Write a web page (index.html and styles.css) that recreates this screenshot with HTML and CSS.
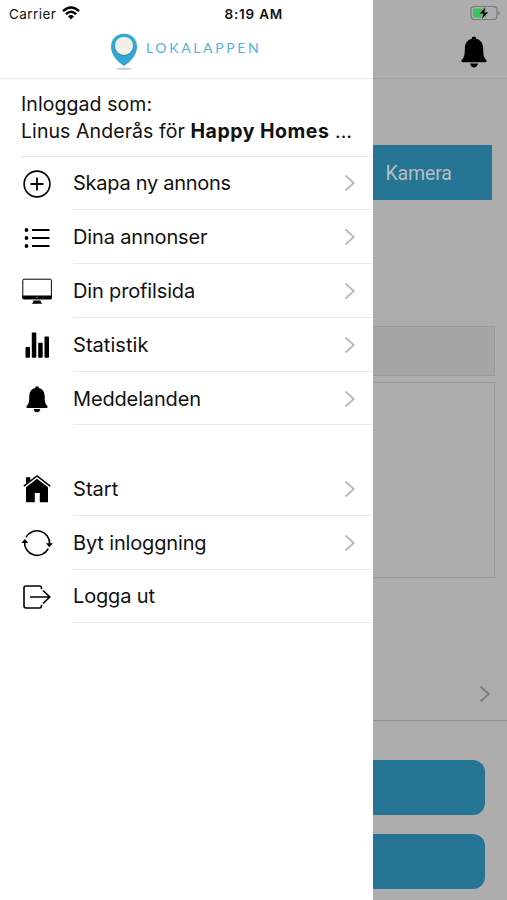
FILE: index.html
```html
<!DOCTYPE html>
<html lang="sv">
<head>
<meta charset="utf-8">
<meta name="viewport" content="width=device-width, initial-scale=1">
<title>Lokalappen</title>
<link rel="stylesheet" href="styles.css">
</head>
<body>
<svg width="0" height="0" class="defs" aria-hidden="true">
  <symbol id="bell" viewBox="0 0 26 32"><path d="M13 .5c1.300 0 2.100 .9 2.200 2.200 4.500 1 6.700 4.600 6.900 9.300.2 7 .6 9.500 3.400 12.200.4 1.300-.2 2-1.300 2H1.800c-1.100 0-1.700-.7-1.300-2C3.300 21.500 3.700 19 3.900 12c.2-4.700 2.400-8.300 6.900-9.300C10.900 1.400 11.700.5 13 .5zM9 27.500h8c-.3 2.400-1.900 3.900-4 3.900s-3.700-1.500-4-3.900z"/></symbol>
  <symbol id="chevron" viewBox="0 0 12 18"><path d="M1.500 1.500L9.700 9l-8.200 7.500" fill="none" stroke="currentColor" stroke-width="2"/></symbol>
</svg>
<div class="screen">
  <aside class="drawer">
    <header class="top">
      <div class="status">
        <span class="carrier">Carrier</span>
        <svg class="wifi" viewBox="0 0 18 14"><path d="M1 5.200Q9-2.200 17 5.200M3.900 8.100Q9 3.400 14.100 8.100" fill="none" stroke="#000" stroke-width="2.400"/><path d="M9 13.500L5.900 10.300Q9 7.800 12.100 10.300z"/></svg>
        <span class="time">8:19 AM</span>
      </div>
      <div class="brand">
        <svg class="pin" viewBox="0 0 28 38"><ellipse cx="14" cy="35.700" rx="8" ry="1.100" fill="#c9c9c9"/><path d="M14 .8C6.400 .8 1 6.300 1 13.400 1 22.500 7.500 28.500 14 33c6.500-4.500 13-10.500 13-19.600C27 6.300 21.600 .8 14 .8z" fill="#35a5d3"/><circle cx="14" cy="13.700" r="9.300" fill="#2088b2"/><circle cx="14" cy="12.800" r="9.100" fill="#f0f1eb"/></svg>
        <span class="name">LOKALAPPEN</span>
      </div>
    </header>
    <div class="user"><div>Inloggad som:</div><div class="who">Linus Anderås för <b>Happy Homes</b> ...</div></div>
    <nav class="menu">
      <a class="row"><svg class="icon" viewBox="0 0 32 32"><g fill="none" stroke="#000" stroke-width="1.600"><circle cx="16" cy="16" r="12.900"/><path d="M16 9.500v13M9.500 16h13" stroke-width="1.800"/></g></svg><span class="label"><span class="tight">Skapa ny annons</span><svg class="chev"><use href="#chevron"/></svg></span></a>
      <a class="row"><svg class="icon" viewBox="0 0 32 32"><path d="M11 8h17.500M11 16h17.500M11 24h17.500" stroke="#000" stroke-width="1.800"/><circle cx="5.500" cy="8" r="1.900"/><circle cx="5.500" cy="16" r="1.900"/><circle cx="5.500" cy="24" r="1.900"/></svg><span class="label"><span>Dina annonser</span><svg class="chev"><use href="#chevron"/></svg></span></a>
      <a class="row"><svg class="icon" viewBox="0 0 32 32"><rect x="1.800" y="4.200" width="28.600" height="19.600" rx="1.200" fill="none" stroke="#000" stroke-width="1"/><path d="M1.300 20.500h29.600v2.300q0 1.500-1.500 1.500H2.800q-1.500 0-1.500-1.500zM12.500 25.500h7l.5 2 1.500 1.300h-11l1.500-1.300z"/><circle cx="16" cy="22.400" r=".6" fill="#aaa"/></svg><span class="label"><span>Din profilsida</span><svg class="chev"><use href="#chevron"/></svg></span></a>
      <a class="row"><svg class="icon" viewBox="0 0 32 32"><rect x="4.500" y="18" width="4.500" height="10.800" rx=".8"/><rect x="10.800" y="3.500" width="4.500" height="25.300" rx=".8"/><rect x="17.200" y="13.700" width="4.500" height="15.100" rx=".8"/><rect x="23.500" y="7.500" width="4.500" height="21.300" rx=".8"/></svg><span class="label"><span class="natural">Statistik</span><svg class="chev"><use href="#chevron"/></svg></span></a>
      <a class="row"><svg class="icon" viewBox="0 0 32 32"><use href="#bell" x="5" y="2.800" width="22" height="27"/></svg><span class="label"><span>Meddelanden</span><svg class="chev"><use href="#chevron"/></svg></span></a>
    </nav>
    <nav class="menu second">
      <a class="row"><svg class="icon" viewBox="0 0 32 32"><path d="M5 14.200L16 5.700l11 8.500v15H18.800V20h-5v9.200H5z"/><path d="M2.800 13.200L16 3l13.200 10.200" fill="none" stroke="#000" stroke-width="1.500"/><path d="M5 4.200h4.300v3L5 10.600z"/></svg><span class="label"><span class="natural">Start</span><svg class="chev"><use href="#chevron"/></svg></span></a>
      <a class="row"><svg class="icon" viewBox="0 0 32 32"><path d="M5 10.200A12.600 12.600 0 0 1 28.600 17M27.300 21.600A12.600 12.600 0 0 1 3.600 14.500" fill="none" stroke="#000" stroke-width="1.600"/><path d="M.3 16l3.500-4 3.500 4zM24.900 16.300h7l-3.500 4z"/></svg><span class="label"><span>Byt inloggning</span><svg class="chev"><use href="#chevron"/></svg></span></a>
      <a class="row"><svg class="icon" viewBox="0 0 32 32"><path d="M20.500 8.200V7q0-2-2-2H5Q3 5 3 7v18q0 2 2 2h13.500q2 0 2-2v-1.200M9 16h19.500M22 9.500l6.800 6.500-6.800 6.500" fill="none" stroke="#000" stroke-width="1.600"/></svg><span class="label"><span>Logga ut</span></span></a>
    </nav>
  </aside>
  <main class="page">
    <header class="page-top">
      <svg class="battery" viewBox="0 0 32 16"><rect x="1" y="1.500" width="26" height="13" rx="3.500" fill="none" stroke="#777" stroke-width="1.200"/><rect x="3" y="3.500" width="13.500" height="9" rx="1.500" fill="#35c759"/><path d="M28.500 5.800q3 2.200 0 4.400z" fill="#777"/><path d="M16 1.500L8.800 8.900h4.100L11.400 14.700 18.800 7.100h-4.200z" fill="#000" stroke="#adadad" stroke-width=".7"/></svg>
      <svg class="alert"><use href="#bell"/></svg>
    </header>
    <div class="camera"><span>Kamera</span></div>
    <div class="field"></div>
    <div class="area"></div>
    <div class="link"><svg class="chev"><use href="#chevron"/></svg></div>
    <div class="button"></div>
    <div class="button"></div>
  </main>
</div>
</body>
</html>
```
FILE: styles.css
```css
* { box-sizing: border-box; }
body { margin: 0; font-family: Inter, "Liberation Sans", sans-serif; color: #111; }
svg { display: block; flex: none; }
.defs { position: absolute; }
.screen { display: flex; width: 507px; height: 900px; overflow: hidden; background: #fff; }
.drawer { width: 372.500px; flex: none; background: #fff; }
.top { height: 79px; border-bottom: 1px solid #ececec; }
.status { display: flex; align-items: center; height: 27px; padding-left: 9px; font-size: 13.500px; }
.carrier { width: 53px; letter-spacing: .42px; white-space: nowrap; }
.wifi { width: 18px; height: 14px; margin-top: -2px; }
.time { margin-left: 144.500px; font-weight: 600; letter-spacing: .8px; white-space: nowrap; }
.brand { display: flex; padding: 6px 0 0 110px; }
.pin { width: 28px; height: 38px; }
.name { margin: 5px 0 0 8px; font: 14px/20px Lato, sans-serif; letter-spacing: 2.650px; color: #50b3dc; }
.user { height: 77.500px; margin-left: 21px; padding-top: 12px; border-bottom: 1px solid #e9e9e9; font-size: 19.500px; line-height: 27px; letter-spacing: .08px; white-space: nowrap; }
.user b { font-weight: 700; letter-spacing: .5px; }
.menu { display: flex; flex-direction: column; }
.second { margin-top: 36.500px; }
.row { display: flex; align-items: center; height: 53.800px; padding-left: 21px; }
.icon { width: 32px; height: 32px; margin-top: 1px; }
.label { display: flex; flex: 1; align-items: center; justify-content: space-between; height: 100%; margin-left: 20px; padding: 1px 17px 0 0; border-bottom: 1px solid #e9e9e9; font-size: 20px; letter-spacing: -.15px; white-space: nowrap; }
.tight { letter-spacing: -.27px; }
.natural { letter-spacing: .05px; }
.chev { width: 12px; height: 18px; color: #bdbdbd; }
.page { flex: 1; background: #adadad; }
.page-top { display: flex; flex-direction: column; align-items: flex-end; height: 79px; padding-top: 5px; border-bottom: 1px solid #a1a1a1; }
.battery { width: 32px; height: 16px; margin-right: 5px; }
.alert { width: 26px; height: 32px; margin: 15px 20px 0 0; }
.camera { display: flex; align-items: center; height: 54.500px; margin: 66px 15px 0 0; padding: 2px 0 0 13px; background: #267594; color: #b8bec0; font: 19.500px Roboto, sans-serif; letter-spacing: -.15px; }
.field { height: 50px; margin: 126.500px 12px 0 0; border: 1.500px solid #9b9b9b; border-left: 0; background: #a5a5a5; }
.area { height: 196px; margin: 6px 12px 0 0; border: 1.500px solid #9b9b9b; border-left: 0; }
.link { display: flex; justify-content: flex-end; height: 143px; padding: 107px 16px 0 0; border-bottom: 1px solid #929292; }
.link .chev { color: #7e7e7e; }
.button { height: 54.500px; margin: 39px 22px 0 0; border-radius: 0 12px 12px 0; background: #267594; }
.button + .button { margin-top: 19.500px; }
```
